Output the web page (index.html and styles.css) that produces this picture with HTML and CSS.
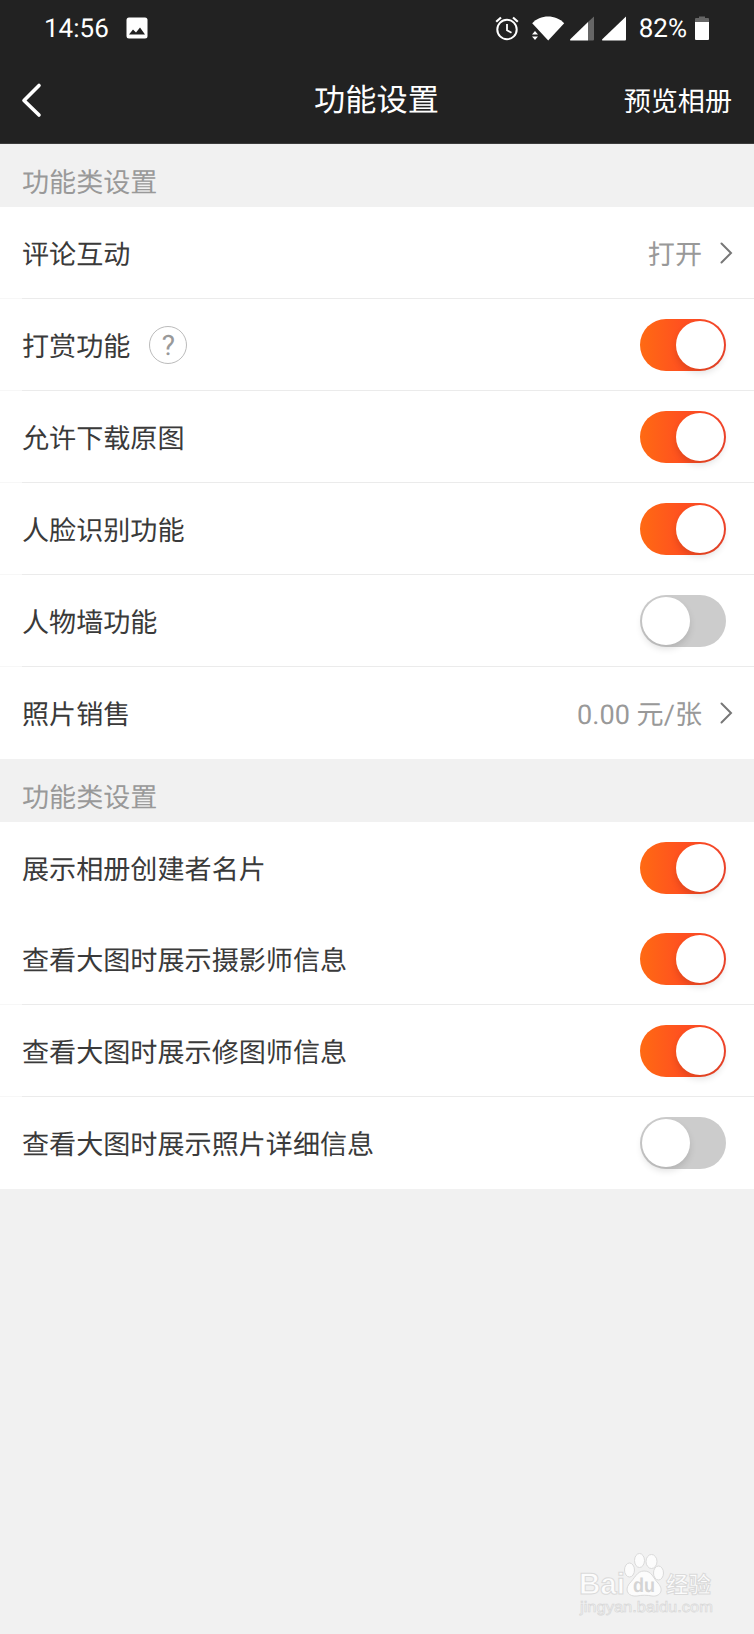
FILE: index.html
```html
<!DOCTYPE html>
<html lang="zh-CN">

<head>
    <meta charset="UTF-8">
    <meta name="viewport" content="width=device-width, initial-scale=1.0">
    <title>功能设置</title>
    <link rel="stylesheet" href="styles.css">
</head>

<body>
    <header class="top">
        <div class="status-bar">
            <span class="clock">14:56</span>
            <svg class="icon-photo" width="22" height="22" viewBox="0 0 22 22">
                <rect x="0.5" y="0.5" width="21" height="21" rx="2.5" fill="#fff"/>
                <path d="M3 17.500L7 12.500L10 15.500L14 10.500L19 17.500Z" fill="#222"/>
            </svg>
            <svg class="icon-alarm" width="24" height="25" viewBox="0 0 24 25" fill="none" stroke="#fff">
                <circle cx="12" cy="13.500" r="9.700" stroke-width="2"/>
                <path d="M12 8v6.200l4.500 2.600" stroke-width="1.800"/>
                <path d="M1.200 5.800L6 1.500M22.800 5.800L18 1.500" stroke-width="2.200"/>
            </svg>
            <svg class="icon-wifi" width="34" height="25" viewBox="0 0 34 25" fill="#fff">
                <path d="M1.200 7.200C9-1.800 25-1.800 33.200 7.200L17.200 24.500Z"/>
                <path d="M1 18.500L4 15l3 3.500zM1 20.500h6L4 24z"/>
            </svg>
            <svg class="icon-signal" width="24" height="25" viewBox="0 0 24 25">
                <path d="M18 6L24 0.500V23.500a1 1 0 0 1-1 1H18Z" fill="#666"/>
                <path d="M18 6V24.500H0.500Q-0.500 24 0.500 23Z" fill="#fff"/>
            </svg>
            <svg class="icon-signal" width="24" height="25" viewBox="0 0 24 25">
                <path d="M24 0.500V23.500a1 1 0 0 1-1 1H0.500Q-0.500 24 0.500 23Z" fill="#fff"/>
            </svg>
            <span class="battery-text">82%</span>
            <svg class="icon-battery" width="14" height="24" viewBox="0 0 14 24">
                <path d="M4 0.500h6V2h3q1 0 1 1v3H0V3q0-1 1-1h3z" fill="#666"/>
                <path d="M0 6h14v17q0 1-1 1H1q-1 0-1-1z" fill="#fff"/>
            </svg>
        </div>
        <nav class="nav-bar">
            <svg class="back" width="22" height="36" viewBox="0 0 22 36" fill="none" stroke="#fff" stroke-width="3.600" stroke-linecap="round" stroke-linejoin="round">
                <path d="M18 3.500L3 18.500L18 33"/>
            </svg>
            <h1>功能设置</h1>
            <a class="preview">预览相册</a>
        </nav>
    </header>

    <main>
        <h2 class="group-title">功能类设置</h2>
        <ul class="group">
            <li class="row">
                <span class="label">评论互动</span>
                <span class="value">打开</span>
                <svg class="arrow" width="13" height="22" viewBox="0 0 13 22"><path d="M1.500 1.500L11 11L1.500 20.500"/></svg>
            </li>
            <li class="row">
                <span class="label">打赏功能</span>
                <span class="help">?</span>
                <i class="switch on"></i>
            </li>
            <li class="row">
                <span class="label">允许下载原图</span>
                <i class="switch on"></i>
            </li>
            <li class="row">
                <span class="label">人脸识别功能</span>
                <i class="switch on"></i>
            </li>
            <li class="row">
                <span class="label">人物墙功能</span>
                <i class="switch"></i>
            </li>
            <li class="row">
                <span class="label">照片销售</span>
                <span class="value">0.00 元/张</span>
                <svg class="arrow" width="13" height="22" viewBox="0 0 13 22"><path d="M1.500 1.500L11 11L1.500 20.500"/></svg>
            </li>
        </ul>

        <h2 class="group-title">功能类设置</h2>
        <ul class="group">
            <li class="row plain">
                <span class="label">展示相册创建者名片</span>
                <i class="switch on"></i>
            </li>
            <li class="row">
                <span class="label">查看大图时展示摄影师信息</span>
                <i class="switch on"></i>
            </li>
            <li class="row">
                <span class="label">查看大图时展示修图师信息</span>
                <i class="switch on"></i>
            </li>
            <li class="row">
                <span class="label">查看大图时展示照片详细信息</span>
                <i class="switch"></i>
            </li>
        </ul>
    </main>

    <!-- watermark -->
    <svg class="watermark" width="144" height="72" viewBox="0 0 144 72">
        <g class="mark">
            <text class="brand" x="4" y="44" textLength="46" lengthAdjust="spacingAndGlyphs">Bai</text>
            <ellipse cx="54.500" cy="20" rx="5" ry="7"/>
            <ellipse cx="64.500" cy="10.500" rx="5" ry="7"/>
            <ellipse cx="76.500" cy="11.500" rx="5.500" ry="7"/>
            <ellipse cx="83.500" cy="23" rx="5" ry="7"/>
            <path d="M69 21C77 21 78 28 83 33C90 41 84 47 77 46C72 45 67 45 62 46C54 47 49 41 54 34C60 28 62 21 69 21Z"/>
            <text class="cn" x="91" y="43" textLength="45" lengthAdjust="spacingAndGlyphs">经验</text>
        </g>
        <text class="du" x="58" y="42" textLength="22" lengthAdjust="spacingAndGlyphs">du</text>
        <text class="url" x="5" y="62" textLength="133" lengthAdjust="spacingAndGlyphs">jingyan.baidu.com</text>
    </svg>
</body>

</html>
```
FILE: styles.css
```css
* {
    box-sizing: border-box;
}

body {
    margin: 0;
    min-height: 1634px;
    background-color: #f1f1f1;
    color: #3a3a3a;
    font-family: Roboto, "Noto Sans CJK SC", sans-serif;
    font-size: 27.1px;
    font-weight: 400;
    line-height: 40px;
    text-rendering: geometricPrecision;
}

.top {
    height: 144px;
    background-color: #222;
    border-bottom: 1px solid #3c3c3c;
    color: #fff;
}

.status-bar {
    display: flex;
    align-items: center;
    height: 56px;
    padding: 0 45px 0 44px;
    font-size: 26px;
}

.clock,
.battery-text {
    padding-top: 1px;
}

.icon-photo {
    margin-left: 17px;
}

.icon-alarm {
    margin-left: auto;
}

.icon-wifi {
    margin-left: 12px;
}

.icon-signal {
    margin-left: 5px;
}

.icon-signal + .icon-signal {
    margin-left: 8px;
}

.battery-text {
    margin-left: 13px;
}

.icon-battery {
    margin-left: 8px;
}

.nav-bar {
    display: grid;
    grid-template-columns: 1fr auto 1fr;
    align-items: center;
    height: 87px;
    padding: 0 22px 0 21px;
}

.nav-bar h1 {
    margin: 0;
    padding-top: 2px;
    font-size: 31.2px;
    font-weight: 400;
}

.preview {
    justify-self: end;
    padding-top: 4px;
}

.group-title {
    height: 63px;
    margin: 0;
    padding: 19px 22px 0;
    color: #999;
    font-size: 27.1px;
    font-weight: 400;
}

.group {
    margin: 0;
    padding: 0;
    background-color: #fff;
    list-style: none;
}

/* the divider fades out left of the label */
.row {
    display: flex;
    align-items: center;
    height: 92px;
    padding: 0 21px 1px 22px;
    background: linear-gradient(90deg, #f7f7f7 22px, #ebebeb 22px) bottom / 100% 1px no-repeat;
}

.row:last-child {
    background: none;
}

.row.plain {
    height: 91px;
    padding-bottom: 0;
    background: none;
}

.label,
.value {
    padding-top: 4px;
}

.value {
    margin-left: auto;
    color: #999;
}

.arrow {
    margin-left: 18px;
    fill: none;
    stroke: #777;
    stroke-width: 2;
    stroke-linecap: round;
}

.help {
    width: 38px;
    height: 38px;
    margin-left: 19px;
    border: 1px solid #bbb;
    border-radius: 50%;
    color: #999;
    font-size: 28px;
    line-height: 37px;
    text-align: center;
}

.switch {
    display: flex;
    width: 86px;
    height: 52px;
    margin-left: auto;
    margin-right: 7px;
    padding: 2px;
    border-radius: 26px;
    background-color: #ccc;
}

.switch::before {
    content: "";
    width: 48px;
    height: 48px;
    border-radius: 50%;
    background-color: #fff;
    box-shadow: 0 4px 7px rgba(0, 0, 0, 0.12);
}

.switch.on {
    justify-content: flex-end;
    background: linear-gradient(90deg, #ff6a13, #ff5020 50%, #f4452c);
}

.watermark {
    position: absolute;
    left: 575px;
    top: 1550px;
    font-family: "Liberation Sans", "Noto Sans CJK SC", sans-serif;
}

.mark {
    fill: #fcfcfc;
    stroke: #dadada;
    stroke-width: 1;
}

.brand {
    font-size: 30px;
    font-weight: 700;
}

.cn {
    font-size: 23px;
    font-weight: 700;
}

.du {
    fill: #d4d4d4;
    font-size: 20px;
    font-weight: 700;
}

.url {
    fill: #fafafa;
    stroke: #d8d8d8;
    stroke-width: 0.7;
    font-size: 15px;
}
```
